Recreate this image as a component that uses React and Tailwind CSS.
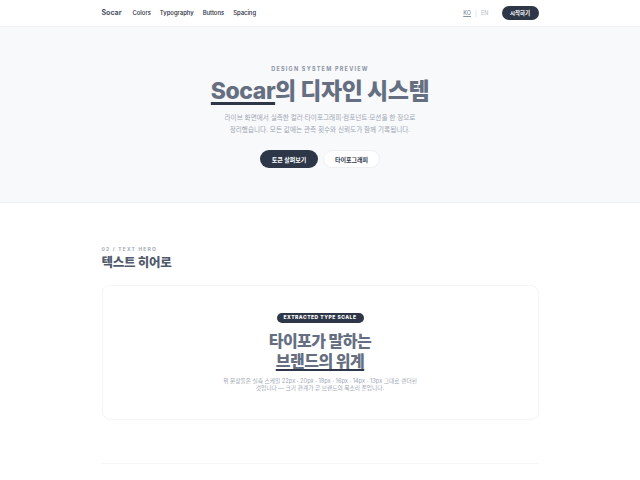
export default function App() {
  const font = { fontFamily: 'Inter, "Noto Sans CJK KR", sans-serif' };

  return (
    <div className="min-h-screen bg-white text-[#2d3748]" style={font}>
      {/* 헤더 */}
      <header className="h-[27px] border-b border-[#eef0f3] bg-white">
        <div className="mx-auto flex h-full w-[437px] items-center">
          <span className="text-[7px] font-bold text-[#4a5568]">Socar</span>
          <nav className="ml-[11px] flex items-center gap-[9px] text-[5.9px] font-medium text-[#1f2937]">
            <span>Colors</span>
            <span>Typography</span>
            <span>Buttons</span>
            <span>Spacing</span>
          </nav>
          <div className="ml-auto flex items-center">
            <span className="text-[5.5px] font-medium text-[#8a93a3] underline underline-offset-1">KO</span>
            <span className="mx-[4px] text-[6px] text-[#d5d9df]">|</span>
            <span className="text-[5.5px] text-[#b3b9c3]">EN</span>
            <button className="ml-[13px] h-[14px] w-[37px] rounded-full bg-[#2d3748] text-[5.5px] font-bold leading-[14px] text-white">
              시작하기
            </button>
          </div>
        </div>
      </header>

      {/* 히어로 */}
      <section className="flex h-[176px] flex-col items-center border-b border-[#eceef2] bg-[#f8f9fb] pt-[38px]">
        <p className="text-[5.5px] font-bold leading-[8px] tracking-[0.22em] text-[#8a93a3]">DESIGN SYSTEM PREVIEW</p>
        <h1 className="mt-[4px] text-[23px] font-extrabold leading-[28px] tracking-[-0.02em] text-[#666f81]">
          <span className="underline decoration-[#2d3748] decoration-[3px] underline-offset-[3px]">Socar</span>의 디자인 시스템
        </h1>
        <p className="mt-[7px] text-center text-[6.6px] leading-[12px] text-[#a0a7b3]">
          라이브 화면에서 실측한 컬러·타이포그래피·컴포넌트·모션을 한 장으로
          <br />
          정리했습니다. 모든 값에는 관측 횟수와 신뢰도가 함께 기록됩니다.
        </p>
        <div className="mt-[14px] flex gap-[5px]">
          <button className="h-[18px] w-[58px] rounded-full bg-[#2d3748] text-[6px] font-bold text-white">
            토큰 살펴보기
          </button>
          <button className="h-[18px] w-[57px] rounded-full border border-[#eef0f3] bg-white text-[6px] font-bold text-[#2d3748]">
            타이포그래피
          </button>
        </div>
      </section>

      {/* 텍스트 히어로 */}
      <section className="mx-auto w-[437px] pt-[42px]">
        <p className="text-[4.9px] font-bold leading-[8px] tracking-[0.25em] text-[#a0a7b3]">02 / TEXT HERO</p>
        <h2 className="mt-[2px] text-[12.5px] font-extrabold leading-[16px] tracking-[-0.02em] text-[#525b6c]">
          텍스트 히어로
        </h2>
        <div className="mt-[14px] flex h-[135px] flex-col items-center rounded-[8px] border border-[#f4f5f7] pt-[27px]">
          <span className="h-[9.5px] rounded-full bg-[#2d3748] px-[7px] text-[5px] font-extrabold leading-[9.5px] tracking-[0.1em] text-white">
            EXTRACTED TYPE SCALE
          </span>
          <h3 className="mt-[8px] text-center text-[16px] font-extrabold leading-[20px] tracking-[-0.03em] text-[#666f81]">
            타이포가 말하는
            <br />
            <span className="underline decoration-[#2d3748] decoration-[2px] underline-offset-[2px]">브랜드의 위계</span>
          </h3>
          <p className="mt-[6px] text-center text-[5.7px] leading-[7px] text-[#a0a7b3]">
            위 문장들은 실측 스케일 22px · 20px · 18px · 16px · 14px · 13px 그대로 렌더된
            <br />
            것입니다 — 크기 관계가 곧 브랜드의 목소리 톤입니다.
          </p>
        </div>
        <div className="mt-[43px] border-t border-[#f4f5f7]" />
      </section>
    </div>
  );
}
